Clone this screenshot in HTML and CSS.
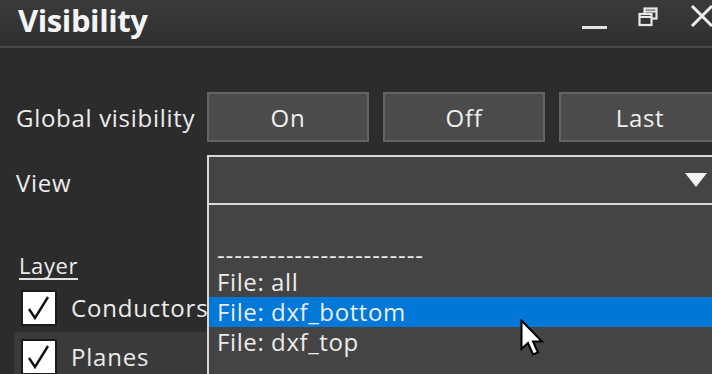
FILE: index.html
```html
<!DOCTYPE html>
<html lang="en">

<head>
  <meta charset="UTF-8">
  <title>Visibility</title>
  <link rel="stylesheet" href="styles.css">
</head>

<body>
  <div id="window">

    <div class="titlebar">
      <h1>Visibility</h1>
      <div class="controls">
        <span class="ctl-min"></span>
        <svg class="ctl-restore" width="20" height="20" viewBox="0 0 20 20">
          <rect x="6.5" y="1.5" width="12" height="10" fill="none" stroke="#e8e8e8" stroke-width="2.2" />
          <rect x="1.5" y="7" width="12" height="11" fill="#343434" stroke="#e8e8e8" stroke-width="2.2" />
          <line x1="1.5" y1="10" x2="13.5" y2="10" stroke="#e8e8e8" stroke-width="2" />
          <line x1="6.5" y1="4.5" x2="18.5" y2="4.5" stroke="#e8e8e8" stroke-width="2" />
        </svg>
        <svg class="ctl-close" width="24" height="22" viewBox="0 0 24 22">
          <path d="M2 1 L22 21 M22 1 L2 21" stroke="#ececec" stroke-width="3" />
        </svg>
      </div>
    </div>

    <div class="panel">
      <div class="row">
        <span class="label">Global visibility</span>
        <button class="btn">On</button>
        <button class="btn">Off</button>
        <button class="btn">Last</button>
      </div>

      <div class="row row-view">
        <span class="label label-view">View</span>
        <div class="combo">
          <span class="arrow"></span>
        </div>
      </div>

      <div class="layers">
        <div class="layer-head">Layer</div>
        <div class="layer-row">
          <span class="check">
            <svg width="30" height="30" viewBox="0 0 30 30">
              <path d="M5 16 L11 25 L24 4" fill="none" stroke="#111" stroke-width="2.4" />
            </svg>
          </span>
          <span class="layer-name">Conductors</span>
        </div>
        <div class="layer-row alt">
          <span class="check">
            <svg width="30" height="30" viewBox="0 0 30 30">
              <path d="M5 16 L11 25 L24 4" fill="none" stroke="#111" stroke-width="2.4" />
            </svg>
          </span>
          <span class="layer-name">Planes</span>
        </div>
      </div>

      <!-- open list of the View combo -->
      <ul class="dropdown">
        <li></li>
        <li class="sep">------------------------</li>
        <li>File: all</li>
        <li class="selected">File: dxf_bottom</li>
        <li>File: dxf_top</li>
        <li class="sep">------------------------</li>
      </ul>

      <svg class="pointer" width="30" height="40" viewBox="0 0 30 40">
        <path d="M1.5 1.5 L1.5 30 L8 24 L13 35.5 L18 33.5 L13 22.5 L22 22.5 Z" fill="#fff" stroke="#000" stroke-width="2" />
      </svg>
    </div>

  </div>
</body>

</html>
```

FILE: styles.css
```css
body {
  margin: 0;
  background-color: #2c2c2c;
  color: #ececec;
  font-family: "Open Sans", "Noto Sans", sans-serif;
  overflow: hidden;
}

#window {
  width: 712px;
  height: 374px;
  overflow: hidden;
  position: relative;
}

.titlebar {
  height: 46px;
  display: flex;
  align-items: center;
  justify-content: space-between;
  padding-left: 18px;
  background: linear-gradient(#3a3a3a, #303030);
  border-bottom: 2px solid #484848;
}

.titlebar h1 {
  margin: 0;
  font-size: 31px;
  font-weight: 700;
  letter-spacing: -0.4px;
  color: #f4f4f4;
  line-height: 1;
  padding-bottom: 5px;
}

.controls {
  display: flex;
  align-items: center;
  margin-right: -2px;
}

.ctl-min {
  display: block;
  width: 25px;
  height: 3px;
  background: #e4e4e4;
  margin-top: 9px;
  margin-right: 31px;
}

.ctl-restore {
  margin-top: -12px;
  margin-right: 32px;
}

.ctl-close {
  margin-top: -14px;
}

.panel {
  padding: 44px 0 0 16px;
}

.row {
  display: flex;
  align-items: center;
  gap: 14px;
}

.label {
  flex: none;
  width: 177px;
  font-size: 24px;
  letter-spacing: 0.7px;
  white-space: nowrap;
}

.label-view {
  padding-top: 4px;
}

.btn {
  flex: none;
  width: 162px;
  height: 50px;
  background-color: #4b4b4b;
  border: 2px solid #646464;
  color: #efefef;
  font-family: inherit;
  font-size: 24px;
  letter-spacing: 0.7px;
  padding: 0;
}

.row-view {
  margin-top: 13px;
}

.combo {
  flex: none;
  position: relative;
  width: 520px;
  height: 46px;
  background-color: #444;
  border: 2px solid #d8d8d8;
  border-right: none;
}

.arrow {
  position: absolute;
  right: 22px;
  top: 16px;
  width: 0;
  height: 0;
  border-left: 11px solid transparent;
  border-right: 11px solid transparent;
  border-top: 14px solid #f2f2f2;
}

.layers {
  margin-top: 48px;
}

.layer-head {
  display: inline-block;
  margin-left: 3px;
  font-size: 22px;
  line-height: 25px;
  letter-spacing: 0.6px;
  border-bottom: 2px solid #e0e0e0;
}

.layer-row {
  display: flex;
  align-items: center;
  gap: 14px;
  height: 49px;
  padding-left: 5px;
  width: 200px;
}

.layer-row:nth-child(2) {
  margin-top: 3px;
}

.layer-row.alt {
  margin-left: -2px;
  padding-left: 7px;
  background-color: #3a3a3a;
}

.check {
  flex: none;
  display: flex;
  align-items: center;
  justify-content: center;
  background: #fff;
  border: 2px solid #1a1a1a;
  box-sizing: border-box;
  width: 36px;
  height: 36px;
}

.layer-name {
  font-size: 24px;
  letter-spacing: 0.8px;
  white-space: nowrap;
}

.dropdown {
  position: absolute;
  left: 207px;
  top: 205px;
  width: 520px;
  height: 200px;
  margin: 0;
  padding: 2px 0 0;
  list-style: none;
  background-color: #444;
  border-left: 2px solid #d8d8d8;
  font-size: 24px;
  letter-spacing: 0.6px;
}

.dropdown li {
  height: 30px;
  line-height: 30px;
  padding-left: 8px;
  white-space: nowrap;
}

.dropdown li.sep {
  letter-spacing: 0.9px;
  padding-top: 6px;
  height: 24px;
  line-height: 24px;
}

.dropdown li.selected {
  background-color: #0078d7;
}

.pointer {
  position: absolute;
  left: 520px;
  top: 319px;
}
```
